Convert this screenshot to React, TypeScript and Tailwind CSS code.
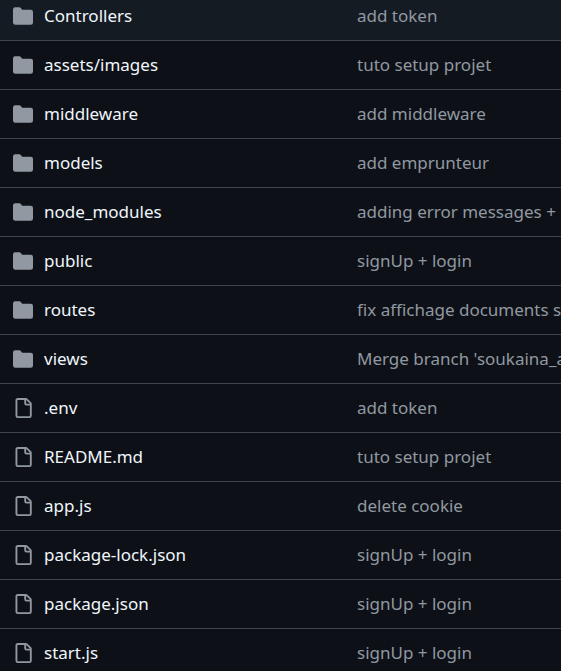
type Entry = { name: string; message: string; folder?: boolean };

const entries: Entry[] = [
  { name: "Controllers", message: "add token", folder: true },
  { name: "assets/images", message: "tuto setup projet", folder: true },
  { name: "middleware", message: "add middleware", folder: true },
  { name: "models", message: "add emprunteur", folder: true },
  { name: "node_modules", message: "adding error messages + r", folder: true },
  { name: "public", message: "signUp + login", folder: true },
  { name: "routes", message: "fix affichage documents si", folder: true },
  { name: "views", message: "Merge branch 'soukaina_a", folder: true },
  { name: ".env", message: "add token" },
  { name: "README.md", message: "tuto setup projet" },
  { name: "app.js", message: "delete cookie" },
  { name: "package-lock.json", message: "signUp + login" },
  { name: "package.json", message: "signUp + login" },
  { name: "start.js", message: "signUp + login" },
];

function FolderIcon() {
  return (
    <svg viewBox="0 0 16 16" className="size-5 fill-[#9198a1]" aria-hidden="true">
      <path d="M1.75 1A1.75 1.75 0 0 0 0 2.75v10.5C0 14.216.784 15 1.75 15h12.5A1.75 1.75 0 0 0 16 13.25v-8.5A1.75 1.75 0 0 0 14.25 3H7.5a.25.25 0 0 1-.2-.1l-.9-1.2C6.07 1.26 5.55 1 5 1H1.75Z" />
    </svg>
  );
}

function FileIcon() {
  return (
    <svg viewBox="0 0 16 16" className="size-5 fill-[#9198a1]" aria-hidden="true">
      <path d="M2 1.75C2 .784 2.784 0 3.75 0h6.586c.464 0 .909.184 1.237.513l2.914 2.914c.329.328.513.773.513 1.237v9.586A1.75 1.75 0 0 1 13.25 16h-9.5A1.75 1.75 0 0 1 2 14.25Zm1.75-.25a.25.25 0 0 0-.25.25v12.5c0 .138.112.25.25.25h9.5a.25.25 0 0 0 .25-.25V6h-2.75A1.75 1.75 0 0 1 9 4.25V1.5Zm6.75.062V4.25c0 .138.112.25.25.25h2.688l-.011-.013-2.914-2.914-.013-.011Z" />
    </svg>
  );
}

export default function App() {
  return (
    <main className="overflow-hidden bg-[#0d1117] font-['Noto_Sans',sans-serif] text-[17px] leading-6">
      <table className="w-full table-fixed border-collapse">
        <tbody>
          {entries.map((entry, index) => (
            <tr key={entry.name} className={index === 0 ? "bg-[#151b23]" : "border-t border-[#3d444d]"}>
              <td className={index === 0 ? "h-10 w-[357px] pb-2 pl-[13px]" : "h-[49px] w-[357px] pl-[13px]"}>
                <a href="#" className="flex items-center gap-[11px] text-[#f0f6fc]">
                  {entry.folder ? <FolderIcon /> : <FileIcon />}
                  {entry.name}
                </a>
              </td>
              <td className={index === 0 ? "whitespace-nowrap pb-2" : "whitespace-nowrap"}>
                <a href="#" className="text-[#9198a1]">{entry.message}</a>
              </td>
            </tr>
          ))}
        </tbody>
      </table>
    </main>
  );
}
